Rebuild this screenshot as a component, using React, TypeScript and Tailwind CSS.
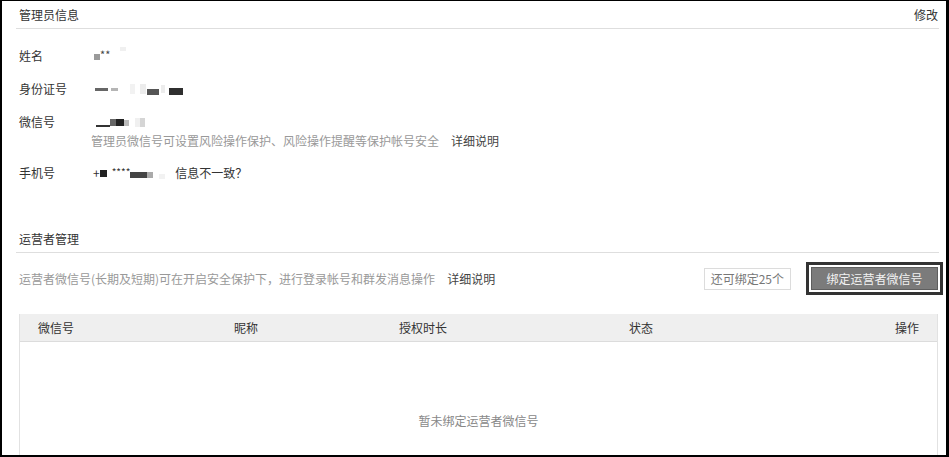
const font = { fontFamily: '"Noto Sans CJK SC", "Noto Sans", sans-serif' };

const Block = ({ className }: { className: string }) => <span className={`inline-block ${className}`} />;

const Row = ({ label, children, className = "h-[33px]" }: { label: string; children: React.ReactNode; className?: string }) => (
  <div className={`flex pl-[3px] ${className}`}>
    <div className="w-[73px] shrink-0 text-[#333]">{label}</div>
    <div className="flex-1 text-[#333]">{children}</div>
  </div>
);

const App = () => {
  return (
    <div
      style={font}
      className="w-[949px] h-[457px] overflow-hidden bg-white border-l-2 border-t border-r-[3px] border-b-2 border-black pl-[14px] pr-[7px] text-[12px] leading-[18px]"
    >
      {/* 管理员信息 */}
      <div className="h-[28px] flex items-center justify-between border-b border-[#dedede] pl-[3px] pr-[1px] text-[#333]">
        <span>管理员信息</span>
        <span>修改</span>
      </div>

      <div className="mt-[11px]">
        <Row label="姓名" className="h-[33px] items-start pt-[7px]">
          <div className="flex items-center h-[18px] pl-[2px]">
            <Block className="w-[6px] h-[6px] bg-[#9a9a9a] mt-[2px]" />
            <span className="text-[11px] leading-[10px] self-start mt-[2px] text-[#444]">**</span>
            <Block className="w-[6px] h-[4px] bg-[#f0f0f0] ml-[10px] self-start" />
          </div>
        </Row>
        <Row label="身份证号" className="h-[33px] items-start pt-[7px]">
          <div className="flex items-center h-[18px] pl-[3px]">
            <Block className="w-[13px] h-[3px] bg-[#666]" />
            <Block className="w-[7px] h-[3px] bg-[#b5b5b5] ml-[3px]" />
            <Block className="w-[5px] h-[10px] bg-[#f2f2f2] ml-[12px]" />
            <Block className="w-[6px] h-[10px] bg-[#ececec] ml-[5px]" />
            <Block className="w-[12px] h-[6px] bg-[#555] ml-[1px] mt-[5px]" />
            <Block className="w-[4px] h-[8px] bg-[#ececec] ml-[2px]" />
            <Block className="w-[14px] h-[7px] bg-[#2f2f2f] ml-[4px] mt-[4px]" />
          </div>
        </Row>
        <Row label="微信号" className="h-[50px] items-start pt-[7px]">
          <div className="flex items-end h-[18px] pl-[4px]">
            <Block className="w-[14px] h-[2px] bg-[#333] mb-[4px]" />
            <Block className="w-[6px] h-[7px] bg-[#666] mb-[5px]" />
            <Block className="w-[8px] h-[7px] bg-[#222] mb-[5px]" />
            <Block className="w-[5px] h-[6px] bg-[#bbb] mb-[5px]" />
            <Block className="w-[5px] h-[9px] bg-[#f0f0f0] mb-[4px] ml-[6px]" />
            <Block className="w-[5px] h-[9px] bg-[#d5d5d5] mb-[4px]" />
          </div>
          <div className="text-[#999] -ml-[1px] mt-[1px]">
            管理员微信号可设置风险操作保护、风险操作提醒等保护帐号安全
            <span className="text-[#444] ml-[12px]">详细说明</span>
          </div>
        </Row>
        <Row label="手机号" className="h-[33px] items-start pt-[8px]">
          <div className="flex items-center h-[18px] pl-[1px]">
            <span className="text-[#333]">+</span>
            <Block className="w-[7px] h-[7px] bg-[#222]" />
            <span className="text-[10px] leading-[10px] self-start mt-[3px] ml-[5px] text-[#333]">****</span>
            <Block className="w-[17px] h-[6px] bg-[#444] mt-[4px]" />
            <Block className="w-[6px] h-[6px] bg-[#aaa] mt-[4px]" />
            <Block className="w-[6px] h-[5px] bg-[#f2f2f2] mt-[6px] ml-[6px]" />
            <span className="ml-[10px] text-[#333]">信息不一致？</span>
          </div>
        </Row>
      </div>

      {/* 运营者管理 */}
      <div className="mt-[36px] h-[28px] flex items-center border-b border-[#dedede] pl-[3px] text-[#333]">
        运营者管理
      </div>

      <div className="mt-[9px] h-[33px] flex items-center pl-[3px]">
        <div className="flex-1 text-[#999]">
          运营者微信号(长期及短期)可在开启安全保护下，进行登录帐号和群发消息操作
          <span className="text-[#444] ml-[12px]">详细说明</span>
        </div>
        <div className="h-[22px] px-[6px] border border-[#dcdcdc] text-[#777] flex items-center">还可绑定25个</div>
        <div className="ml-[15px] -mr-[4px] border-[3px] border-[#333] p-[2px] bg-white">
          <div className="w-[127px] h-[23px] bg-[#7b7b7b] border border-[#5e5e5e] text-[#f2f2f2] flex items-center justify-center">
            绑定运营者微信号
          </div>
        </div>
      </div>

      {/* 表格 */}
      <div className="mt-[19px] ml-[3px] mr-[1px] border-l border-r border-[#e2e2e2]">
        <div className="h-[28px] grid grid-cols-[196px_165px_230px_1fr_auto] items-center bg-[#efefef] border-b border-[#dcdcdc] px-[18px] text-[#333]">
          <span>微信号</span>
          <span>昵称</span>
          <span>授权时长</span>
          <span>状态</span>
          <span>操作</span>
        </div>
        <div className="h-[140px] pt-[70px] text-center text-[#888]">暂未绑定运营者微信号</div>
      </div>
    </div>
  );
};

export default App;
